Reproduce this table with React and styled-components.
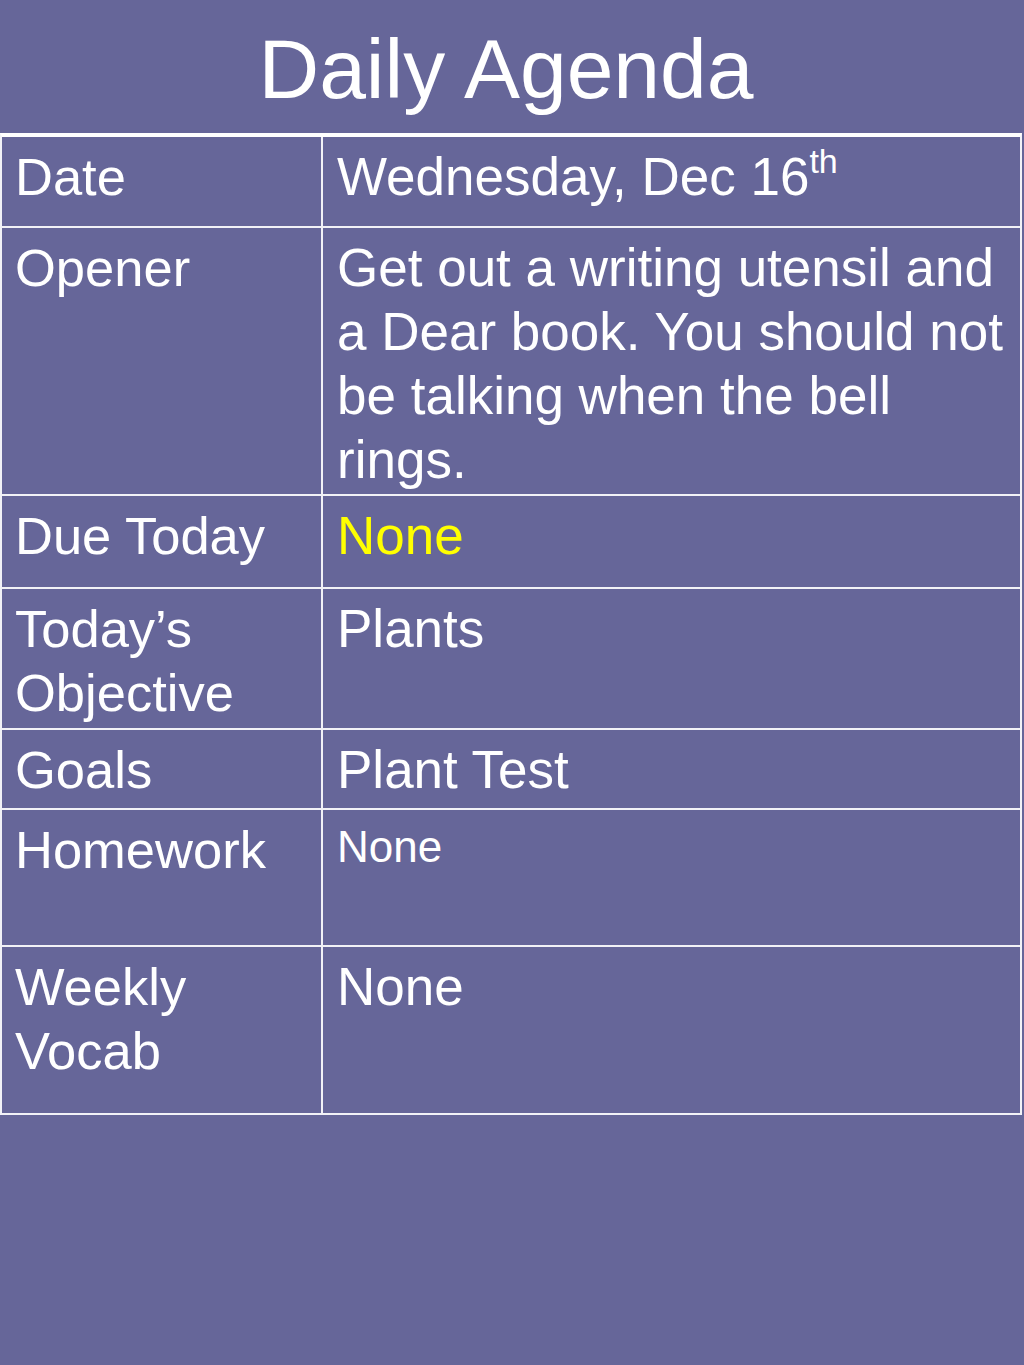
import styled, { createGlobalStyle } from 'styled-components';

const GlobalStyle = createGlobalStyle`
    html, body {
        margin: 0;
        padding: 0;
        background-color: #666699;
    }

    body {
        font-family: "Liberation Sans", Arial, Helvetica, sans-serif;
        color: #ffffff;
    }
`;

const agenda = [
    { id: 1, label: 'Date', value: 'Wednesday, Dec 16', sup: 'th', height: 89 },
    {
        id: 2,
        label: 'Opener',
        value: 'Get out a writing utensil and a Dear book. You should not be talking when the bell rings.',
        height: 266,
    },
    { id: 3, label: 'Due Today', value: 'None', highlight: true, height: 91 },
    { id: 4, label: 'Today’s Objective', value: 'Plants', height: 139 },
    { id: 5, label: 'Goals', value: 'Plant Test', height: 78 },
    { id: 6, label: 'Homework', value: 'None', small: true, height: 135 },
    { id: 7, label: 'Weekly Vocab', value: 'None', height: 166 },
];

const App = () => {
    return (
        <>
            <GlobalStyle />
            <Slide>
                <Title>Daily Agenda</Title>
                <AgendaTable>
                    {agenda.map((row) => (
                        <Row key={row.id} $height={row.height}>
                            <LabelCell>{row.label}</LabelCell>
                            <ValueCell $highlight={row.highlight} $small={row.small}>
                                {row.value}
                                {row.sup && <Sup>{row.sup}</Sup>}
                            </ValueCell>
                        </Row>
                    ))}
                </AgendaTable>
            </Slide>
        </>
    );
};

export default App;

const Slide = styled.div`
    width: 1024px;
    height: 1365px;
    display: flex;
    flex-direction: column;
    background-color: #666699;
`;

const Title = styled.h1`
    box-sizing: border-box;
    height: 133px;
    margin: 0;
    padding: 28px 12px 0 0;
    font-size: 84px;
    font-weight: normal;
    line-height: 83px;
    text-align: center;
    color: #ffffff;
`;

const AgendaTable = styled.div`
    width: 1022px;
    box-sizing: border-box;
    border-top: 4px solid #ffffff;
    border-left: 2px solid #f2f2f7;
    border-right: 2px solid #f2f2f7;
    display: flex;
    flex-direction: column;
`;

const Row = styled.div`
    display: grid;
    grid-template-columns: 321px 1fr;
    height: ${({ $height }) => $height}px;
    border-bottom: 2px solid #f2f2f7;
`;

const LabelCell = styled.div`
    padding: 8px 10px 0 13px;
    border-right: 2px solid #f2f2f7;
    font-size: 52.5px;
    line-height: 64px;
`;

const ValueCell = styled.div`
    padding: ${({ $small }) => ($small ? '10px' : '8px')} 10px 0 14px;
    font-size: ${({ $small }) => ($small ? '44px' : '53px')};
    line-height: ${({ $small }) => ($small ? '53px' : '64px')};
    color: ${({ $highlight }) => ($highlight ? '#ffff00' : '#ffffff')};
`;

const Sup = styled.sup`
    font-size: 34px;
    line-height: 0;
    vertical-align: 22px;
`;
